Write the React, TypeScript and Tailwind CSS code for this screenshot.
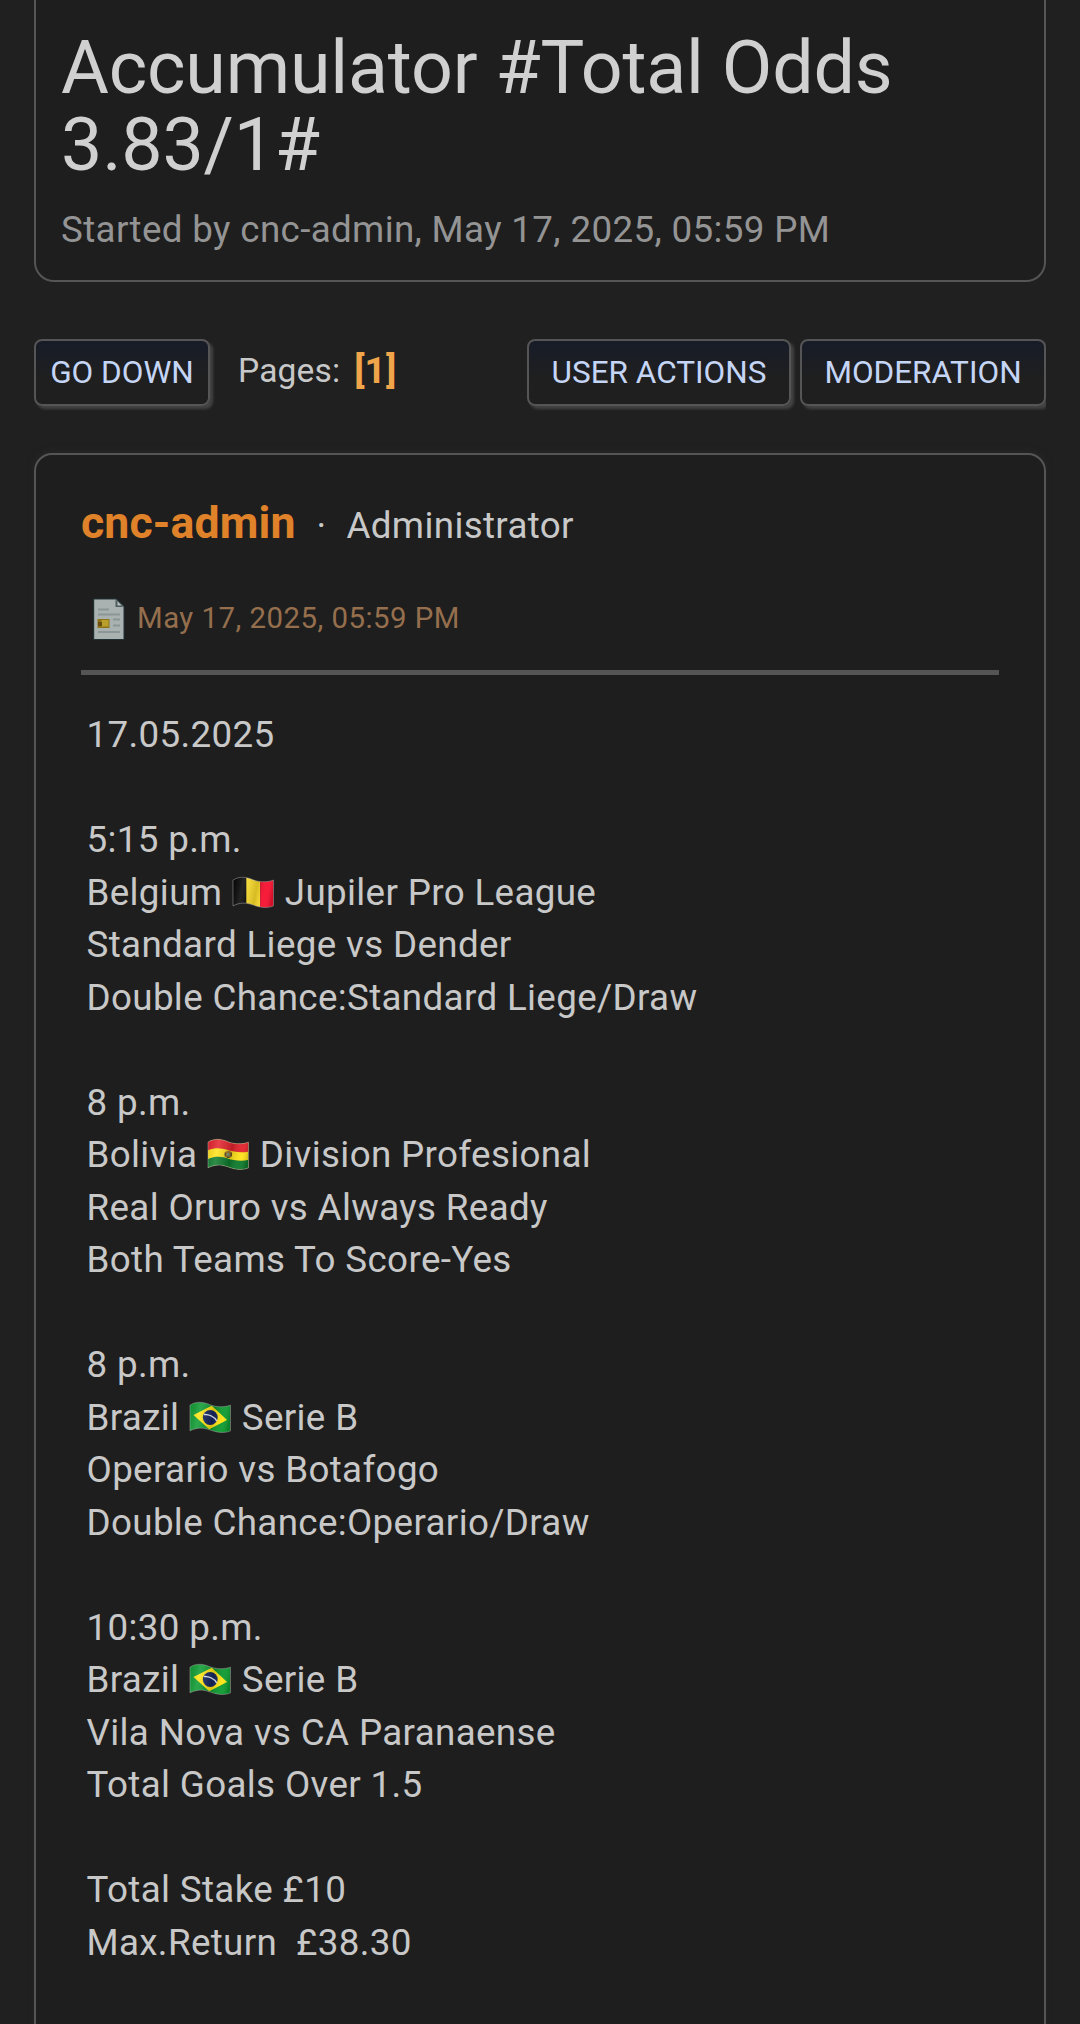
import type { ReactNode } from "react";

const WAVE = "M2 4 C9 -0.5 16 1 22 3.5 S36 6.5 43 4 V30 C36 33 29 31.5 22 29 S9 26.5 2 30 Z";

function Flag({ id, label, children }: { id: string; label: string; children: ReactNode }) {
  return (
    <svg role="img" aria-label={label} viewBox="0 0 45 34" className="-ml-px inline-block h-[34px] w-[44.5px] align-[-5px]">
      <defs>
        <clipPath id={id}>
          <path d={WAVE} />
        </clipPath>
        <linearGradient id={`${id}-shade`} x1="0" x2="1" y1="0" y2="0.15">
          <stop offset="0" stopColor="#000" stopOpacity="0.1" />
          <stop offset="0.3" stopColor="#fff" stopOpacity="0.14" />
          <stop offset="0.62" stopColor="#000" stopOpacity="0.16" />
          <stop offset="0.85" stopColor="#fff" stopOpacity="0.05" />
          <stop offset="1" stopColor="#000" stopOpacity="0.15" />
        </linearGradient>
      </defs>
      <g clipPath={`url(#${id})`}>
        {children}
        <rect width="45" height="34" fill={`url(#${id}-shade)`} />
      </g>
      <path d={WAVE} fill="none" stroke="#bbb" strokeOpacity="0.45" strokeWidth="1" />
    </svg>
  );
}

function Belgium({ id }: { id: string }) {
  return (
    <Flag id={id} label="Belgium">
      <rect width="16" height="34" fill="#000" />
      <rect x="15.5" width="14" height="34" fill="#ffdf2a" />
      <rect x="29.5" width="16" height="34" fill="#f8102f" />
    </Flag>
  );
}

function Bolivia({ id }: { id: string }) {
  return (
    <Flag id={id} label="Bolivia">
      <rect width="45" height="34" fill="#ffe21a" />
      <path d="M0 0H45V13C36 15.500 29 14 22 12S9 9 0 13Z" fill="#e3222c" />
      <path d="M0 22C9 17.500 16 18.500 22 20.500S36 24 45 21.500V34H0Z" fill="#0d7a2c" />
      <circle cx="22.500" cy="16.300" r="3.600" fill="#a5762c" />
      <path d="M19.500 14.500v4M25.500 14.500v4M21 19.500h3" stroke="#5d4a1e" strokeWidth="1.300" />
      <circle cx="22.500" cy="16.500" r="1.600" fill="#6b9a78" />
    </Flag>
  );
}

function Brazil({ id }: { id: string }) {
  return (
    <Flag id={id} label="Brazil">
      <rect width="45" height="34" fill="#0c9a30" />
      <path d="M5.500 14L24 4.500L39.500 19L21.500 28.500Z" fill="#ffe512" />
      <circle cx="22.500" cy="16.500" r="7.500" fill="#14255f" />
      <path d="M16 13.500C21 13 26.500 15.500 29 20" stroke="#dce4f2" strokeWidth="1.500" fill="none" />
    </Flag>
  );
}

function PostIcon() {
  return (
    <svg viewBox="0 0 34 44" className="h-[44px] w-[34px] shrink-0" aria-hidden="true">
      <path d="M1 1.500H25L32.500 9V43H1Z" fill="#203033" />
      <path d="M2.200 2.500H24L31.500 9.500V42H2.200Z" fill="#a9b2b1" />
      <path d="M23.500 2.500V10H31.500Z" fill="#505d5f" />
      <path d="M25.500 4.500V8.500H29.500Z" fill="#b9c0bf" />
      <path d="M6 12.500H17M6 17.500H28M21 22.500H28M21 28.500H28M6 35H28" stroke="#8b9696" strokeWidth="2" />
      <rect x="5.500" y="22" width="12" height="9" fill="#8d7417" />
      <rect x="9.500" y="23" width="7" height="6.500" fill="#b9a02d" />
      <rect x="6" y="25" width="4" height="4" fill="#6b4d12" />
    </svg>
  );
}

const lines: ReactNode[] = [
  "17.05.2025",
  "",
  "5:15 p.m.",
  <>Belgium <Belgium id="be" /> Jupiler Pro League</>,
  "Standard Liege vs Dender",
  "Double Chance:Standard Liege/Draw",
  "",
  "8 p.m.",
  <>Bolivia <Bolivia id="bo" /> Division Profesional</>,
  "Real Oruro vs Always Ready",
  "Both Teams To Score-Yes",
  "",
  "8 p.m.",
  <>Brazil <Brazil id="br1" /> Serie B</>,
  "Operario vs Botafogo",
  "Double Chance:Operario/Draw",
  "",
  "10:30 p.m.",
  <>Brazil <Brazil id="br2" /> Serie B</>,
  "Vila Nova vs CA Paranaense",
  "Total Goals Over 1.5",
  "",
  "Total Stake £10",
  "Max.Return\u00a0 £38.30",
];

function Button({ children, className }: { children: string; className: string }) {
  return (
    <button
      className={`h-[67px] rounded-[8px] border-2 border-[#555] bg-linear-to-b from-[#171c28] to-[#1f1f1f] to-60% text-[31.5px] leading-none whitespace-nowrap text-[#c5d5f5] shadow-[3px_3px_3px_#444] ${className}`}
    >
      {children}
    </button>
  );
}

export default function App() {
  return (
    <div className="h-[2024px] overflow-hidden bg-[#202020] px-[34px] font-[Roboto,sans-serif] text-[36.75px] tracking-[0.35px] text-[#c8c8c8]">
      <header className="h-[282px] rounded-b-[20px] border-2 border-t-0 border-[#555] bg-[#1e1e1e] px-[25px] pt-[30px]">
        <h1 className="text-[73.5px] leading-[77.2px] tracking-[-0.18px] text-[#d0d0d0]">Accumulator #Total Odds 3.83/1#</h1>
        <p className="mt-[20px] leading-[52.5px] whitespace-nowrap text-[#949494]">Started by cnc-admin, May 17, 2025, 05:59 PM</p>
      </header>

      <nav className="mt-[57px] flex h-[67px] items-center tracking-normal">
        <Button className="w-[176px]">GO DOWN</Button>
        <span className="ml-[28px] pb-[3px] text-[33.6px] tracking-[0.15px]">Pages:</span>
        <strong className="ml-[14px] pb-[4px] text-[37.3px] font-bold text-[#f0a54a]">[1]</strong>
        <div className="-mb-2 ml-auto flex gap-[9px] overflow-hidden pb-2">
          <Button className="w-[264px]">USER ACTIONS</Button>
          <Button className="w-[246px]">MODERATION</Button>
        </div>
      </nav>

      <article className="mt-[47px] h-[1640px] rounded-t-[18px] border-2 border-[#555] bg-[#1e1e1e] px-[45px] pt-[40px] shadow-[0_-2px_6px_#262626]">
        <div className="flex h-[56px] items-baseline leading-[56px] whitespace-nowrap">
          <h2 className="text-[44.6px] font-bold tracking-[0.12px] text-[#e0822a]">cnc-admin</h2>
          <span className="ml-[21px]">·</span>
          <span className="ml-[20px]">Administrator</span>
        </div>
        <div className="mt-[46px] flex h-[44px] items-center pl-[11px]">
          <PostIcon />
          <time className="ml-[11px] pb-[2px] text-[29.4px] tracking-[0.47px] text-[#956f4d]">May 17, 2025, 05:59 PM</time>
        </div>
        <hr className="mt-[29px] border-0 border-t-[5px] border-[#555]" />
        <div className="mt-[34px] pl-[5.5px]">
          {lines.map((line, i) => (
            <p key={i} className="h-[52.5px] leading-[52.5px] whitespace-nowrap">{line}</p>
          ))}
        </div>
      </article>
    </div>
  );
}
